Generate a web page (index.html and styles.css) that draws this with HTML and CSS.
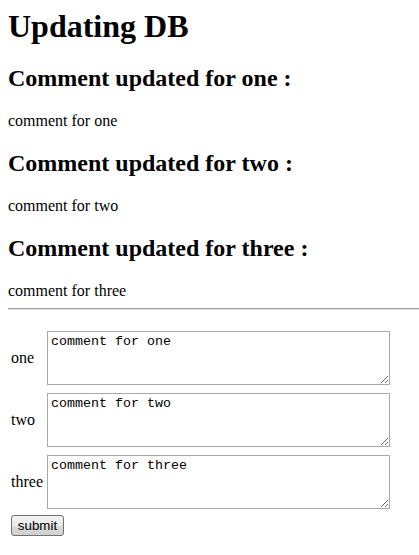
FILE: index.html
```html
<!DOCTYPE html>
<html>
<head>
<meta charset="utf-8">
<title>Updating DB</title>
<link rel="stylesheet" href="styles.css">
</head>
<body>
<h1 class="title">Updating DB</h1>
<h2 class="sub">Comment updated for one :</h2>
<p class="txt">comment for one</p>
<h2 class="sub">Comment updated for two :</h2>
<p class="txt">comment for two</p>
<h2 class="sub">Comment updated for three :</h2>
<p class="txt last">comment for three</p>
<hr class="rule">
<form class="form">
<table class="tbl">
<tr><td class="lbl">one</td><td class="fld"><textarea class="area">comment for one</textarea></td></tr>
<tr><td class="lbl">two</td><td class="fld"><textarea class="area">comment for two</textarea></td></tr>
<tr><td class="lbl">three</td><td class="fld"><textarea class="area">comment for three</textarea></td></tr>
<tr><td class="lbl" colspan="2"><button type="button" class="btn">submit</button></td></tr>
</table>
</form>
</body>
</html>
```
FILE: styles.css
```css
body {
  margin: 8px 0 8px 8px;
  font-family: "Liberation Serif", "Times New Roman", serif;
  font-size: 16px;
  color: #000;
  background: #fff;
}
.title {
  font-size: 32px;
  font-weight: bold;
  margin: 0 0 19px;
}
.sub {
  font-size: 24px;
  font-weight: bold;
  margin: 20px 0;
}
.txt {
  margin: 16px 0;
}
.txt.last {
  margin-bottom: 0;
}
.rule {
  display: block;
  margin: 8px 0 0 0;
  border: 0;
  border-top: 1px solid #a0a0a0;
  border-bottom: 1px solid #e3e3e3;
  height: 0;
}
.form { margin: 0; padding-top: 16px; }
.tbl {
  border-collapse: separate;
  border-spacing: 2px;
}
.lbl {
  padding: 1px;
  vertical-align: middle;
}
.fld { padding: 1px; }
.area {
  display: block;
  box-sizing: border-box;
  width: 343px;
  height: 54px;
  margin: 2px 2px 2px 0;
  padding: 2px 3px;
  border: 1px solid #a9a9a9;
  font-family: "Liberation Mono", "Courier New", monospace;
  font-size: 13.33px;
  line-height: 15px;
  color: #000;
  resize: both;
}
.btn {
  display: block;
  margin: 0;
  width: 53px;
  height: 21px;
  padding: 0;
  border: 1px solid #707070;
  border-radius: 3px;
  background: linear-gradient(#f2f2f2 0%, #ebebeb 50%, #dddddd 51%, #cfcfcf 100%);
  font-family: "Liberation Sans", Arial, sans-serif;
  font-size: 13.33px;
  color: #000;
}
```
